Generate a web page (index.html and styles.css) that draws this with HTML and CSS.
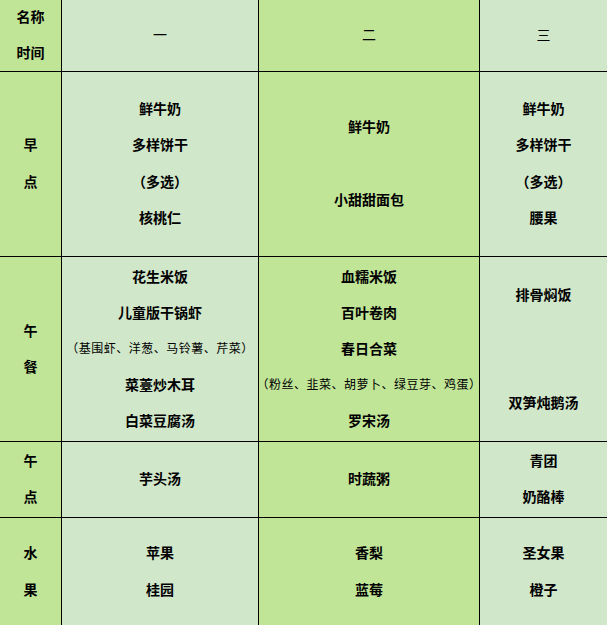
FILE: index.html
```html
<!DOCTYPE html>
<html lang="zh">
<head>
<meta charset="utf-8">
<title>食谱</title>
<link rel="stylesheet" href="styles.css">
</head>
<body>
<div class="menu">
  <div class="cell dark head"><p>名称</p><p>时间</p></div>
  <div class="cell light"><p class="num">一</p></div>
  <div class="cell dark"><p class="num">二</p></div>
  <div class="cell light"><p class="num">三</p></div>

  <div class="cell dark head"><p>早</p><p>点</p></div>
  <div class="cell light"><p>鲜牛奶</p><p>多样饼干</p><p>（多选）</p><p>核桃仁</p></div>
  <div class="cell dark"><p>鲜牛奶</p><p class="blank"></p><p>小甜甜面包</p></div>
  <div class="cell light"><p>鲜牛奶</p><p>多样饼干</p><p>（多选）</p><p>腰果</p></div>

  <div class="cell dark head lunch"><p>午</p><p>餐</p></div>
  <div class="cell light lunch"><p>花生米饭</p><p>儿童版干锅虾</p><p class="note">（基围虾、洋葱、马铃薯、芹菜）</p><p>菜薹炒木耳</p><p>白菜豆腐汤</p></div>
  <div class="cell dark lunch"><p>血糯米饭</p><p>百叶卷肉</p><p>春日合菜</p><p class="note">（粉丝、韭菜、胡萝卜、绿豆芽、鸡蛋）</p><p>罗宋汤</p></div>
  <div class="cell light lunch"><p>排骨焖饭</p><p class="blank"></p><p class="blank"></p><p>双笋炖鹅汤</p></div>

  <div class="cell dark head"><p>午</p><p>点</p></div>
  <div class="cell light"><p>芋头汤</p></div>
  <div class="cell dark"><p>时蔬粥</p></div>
  <div class="cell light"><p>青团</p><p>奶酪棒</p></div>

  <div class="cell dark head"><p>水</p><p>果</p></div>
  <div class="cell light"><p>苹果</p><p>桂园</p></div>
  <div class="cell dark"><p>香梨</p><p>蓝莓</p></div>
  <div class="cell light"><p>圣女果</p><p>橙子</p></div>
</div>
</body>
</html>
```

FILE: styles.css
```css
html, body {
  margin: 0;
  padding: 0;
  height: 100%;
  overflow: hidden;
}

body {
  font-family: "Noto Sans CJK SC", "Noto Sans", sans-serif;
  color: #000;
  background: #d0e7ca;
}

.menu {
  display: grid;
  grid-template-columns: 61px 196px 220px 127px;
  grid-template-rows: 71px 184px 184px 75px 108px;
  gap: 1px;
  background: #000;
  width: 607px;
  height: 625px;
}

.cell {
  display: flex;
  flex-direction: column;
  justify-content: center;
  align-items: center;
  padding-bottom: 3px;
}

.light { background: #d0e7ca; }
.dark { background: #c0e597; }

.cell p {
  margin: 0;
  height: 36.5px;
  line-height: 36.5px;
  font-size: 14px;
  font-weight: 700;
  white-space: nowrap;
  text-align: center;
}

.lunch p {
  height: 36px;
  line-height: 36px;
}

.cell p.num {
  font-weight: 400;
  font-size: 14px;
}

.cell p.note {
  font-size: 12px;
  font-weight: 400;
  letter-spacing: 0.5px;
}
```
